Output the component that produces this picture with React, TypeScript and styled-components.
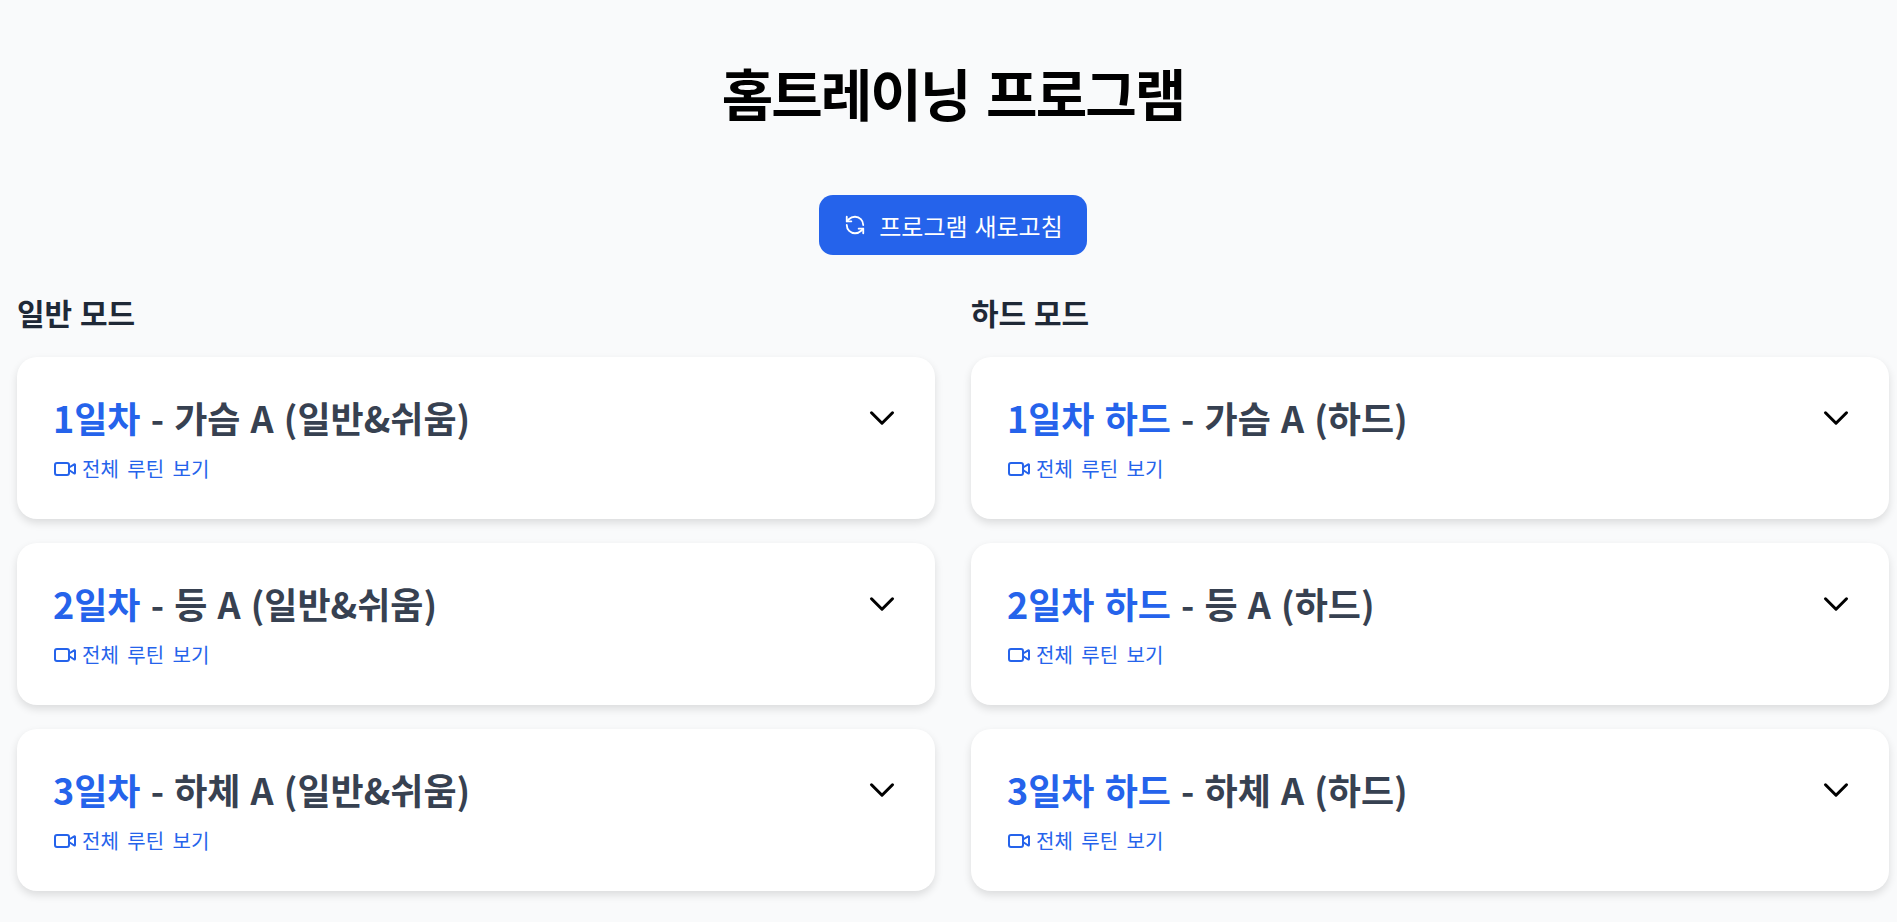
import styled, { createGlobalStyle } from 'styled-components'
import { ChevronDown, RefreshCcw, Video } from 'lucide-react'

const GlobalStyle = createGlobalStyle`
  * {
    box-sizing: border-box;
  }

  body {
    margin: 0;
    background-color: #f9fafb;
    font-family: "Noto Sans CJK KR", "Noto Sans", sans-serif;
  }
`

const columns = [
  {
    mode: '일반 모드',
    suffix: '',
    days: [
      { day: '1일차', title: '가슴 A (일반&쉬움)' },
      { day: '2일차', title: '등 A (일반&쉬움)' },
      { day: '3일차', title: '하체 A (일반&쉬움)' },
    ],
  },
  {
    mode: '하드 모드',
    suffix: ' 하드',
    days: [
      { day: '1일차', title: '가슴 A (하드)' },
      { day: '2일차', title: '등 A (하드)' },
      { day: '3일차', title: '하체 A (하드)' },
    ],
  },
]

const App = () => (
  <Root>
    <GlobalStyle />
    <Title>홈트레이닝 프로그램</Title>

    <Toolbar>
      <RefreshButton>
        <RefreshCcw size={22} strokeWidth={2} />
        프로그램 새로고침
      </RefreshButton>
    </Toolbar>

    <Grid>
      {columns.map(({ mode, suffix, days }) => (
        <Column key={mode}>
          <ModeTitle>{mode}</ModeTitle>
          {days.map(({ day, title }) => (
            <Card key={day}>
              <div>
                <CardTitle>
                  <Day>{day}{suffix}</Day> - {title}
                </CardTitle>
                <RoutineLink>
                  <Video size={24} strokeWidth={2} />
                  전체 루틴 보기
                </RoutineLink>
              </div>
              <Toggle>
                <ChevronDown size={42} strokeWidth={1.75} color="#000000" />
              </Toggle>
            </Card>
          ))}
        </Column>
      ))}
    </Grid>
  </Root>
)

export default App

const Root = styled('div')`
  padding: 56px 8px 31px 17px;
`

const Title = styled('h1')`
  margin: 0 0 67px;
  font-size: 56px;
  line-height: 72px;
  font-weight: 700;
  letter-spacing: -2px;
  word-spacing: 6px;
  text-align: center;
  color: #000000;
`

const Toolbar = styled('div')`
  display: flex;
  justify-content: center;
  margin-bottom: 39px;
`

const RefreshButton = styled('button')`
  display: flex;
  align-items: center;
  gap: 13px;
  height: 60px;
  padding: 0 24px 0 25px;
  border: none;
  border-radius: 14px;
  background-color: #2563eb;
  color: #ffffff;
  font-family: inherit;
  font-size: 24px;
  font-weight: 400;
  word-spacing: 1.5px;
`

const Grid = styled('div')`
  display: grid;
  grid-template-columns: 1fr 1fr;
  column-gap: 36px;
`

const Column = styled('div')`
  display: flex;
  flex-direction: column;
  gap: 24px;
`

const ModeTitle = styled('h2')`
  margin: 0 0 3px;
  font-size: 30px;
  line-height: 36px;
  font-weight: 700;
  word-spacing: 1px;
  color: #1f2937;
`

const Card = styled('div')`
  display: flex;
  justify-content: space-between;
  align-items: flex-start;
  height: 162px;
  padding: 33px 36px;
  background-color: #ffffff;
  border-radius: 20px;
  box-shadow: 0 4px 8px rgba(0, 0, 0, 0.12);
`

const CardTitle = styled('div')`
  font-size: 36px;
  line-height: 54px;
  font-weight: 700;
  word-spacing: 2px;
  color: #374151;
`

const Day = styled('span')`
  color: #2563eb;
`

const RoutineLink = styled('a')`
  display: flex;
  align-items: center;
  gap: 5px;
  margin-top: 10px;
  font-size: 20px;
  line-height: 30px;
  word-spacing: 4px;
  color: #2563eb;
`

const Toggle = styled('span')`
  display: flex;
  margin: 7px -4px 0 0;
`
